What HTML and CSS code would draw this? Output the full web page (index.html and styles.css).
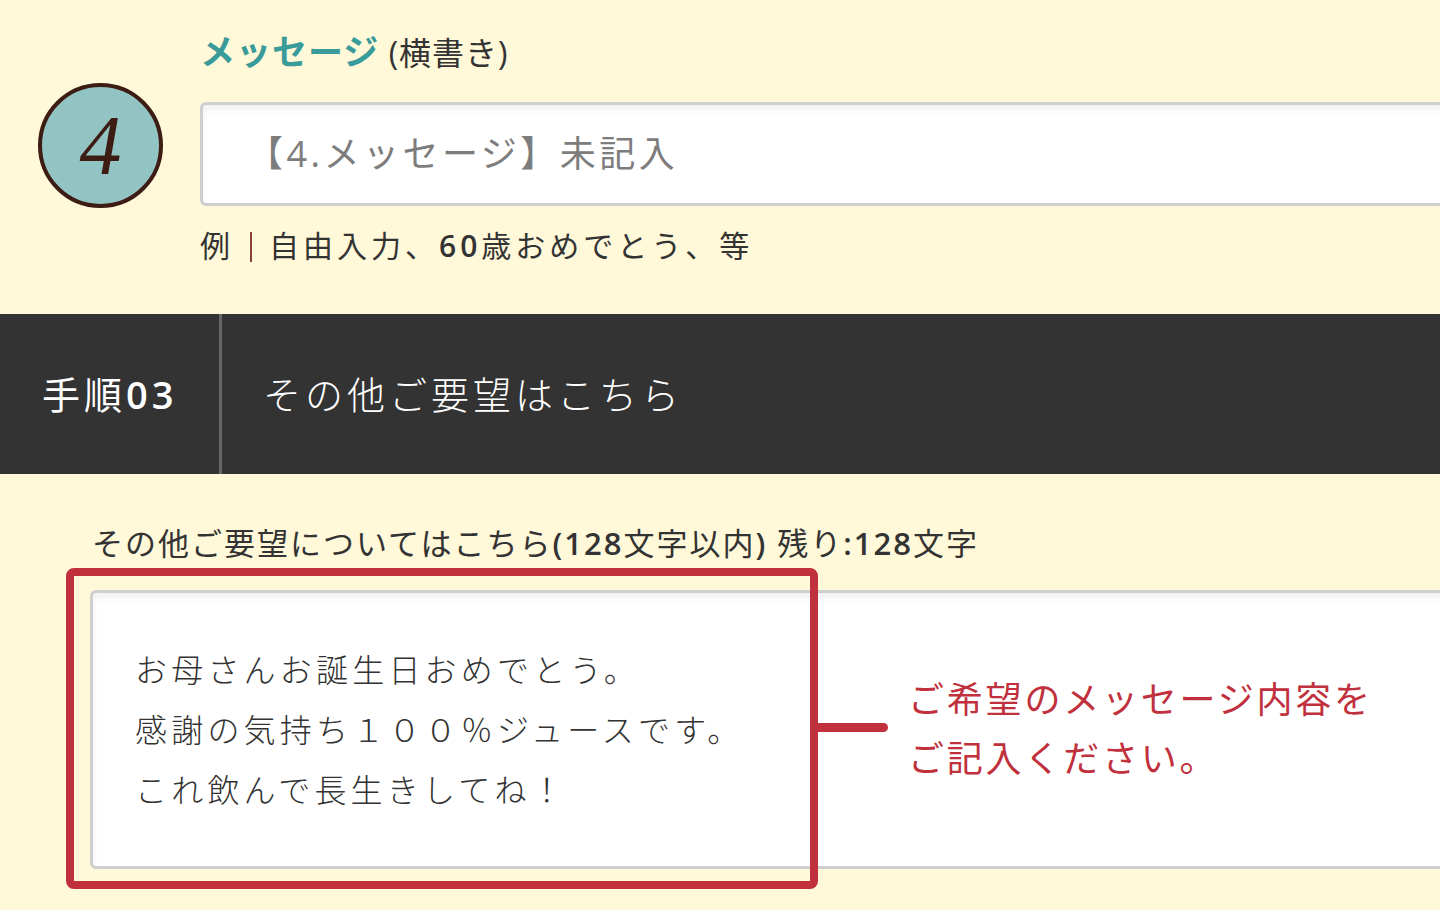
FILE: index.html
```html
<!DOCTYPE html>
<html lang="ja">
<head>
  <meta charset="UTF-8">
  <meta name="viewport" content="width=device-width, initial-scale=1">
  <title>ご注文フォーム</title>
  <link rel="stylesheet" href="styles.css">
</head>
<body>

  <!-- 4. メッセージ -->
  <div class="step">
    <h2 class="step-title"><span class="teal">メッセージ</span> (横書き)</h2>
    <div class="step-num">4</div>
    <div class="text-input">【4.メッセージ】未記入</div>
    <p class="example">例<span class="sep"></span>自由入力、<b>60</b>歳おめでとう、等</p>
  </div>

  <!-- 手順03 -->
  <div class="proc-bar">
    <div class="proc-no">手順<b>03</b></div>
    <div class="proc-title">その他ご要望はこちら</div>
  </div>

  <div class="request">
    <p class="request-label">その他ご要望についてはこちら<b>(128</b>文字以内<b>)</b> 残り<b>:128</b>文字</p>
    <div class="request-box">
      <div class="textarea">お母さんお誕生日おめでとう。<br>感謝の気持ち１００％ジュースです。<br>これ飲んで長生きしてね！</div>
      <!-- 赤枠と説明 -->
      <div class="red-frame"></div>
      <div class="red-line"></div>
      <p class="callout">ご希望のメッセージ内容を<br>ご記入ください。</p>
    </div>
  </div>

</body>
</html>
```

FILE: styles.css
```css
/* 全体 */
body {
  margin: 0;
  width: 1440px;
  height: 910px;
  overflow: hidden;
  background-color: #fff8d9;
  color: #333;
  font-family: "Open Sans", "Noto Sans CJK JP", sans-serif;
}

b {
  font-weight: 600;
}

/* 4. メッセージ */
.step {
  display: grid;
  grid-template-columns: 124px 1fr;
  column-gap: 38px;
  padding: 28px 0 0 38px;
  overflow: hidden;
}

.step-title {
  grid-column: 2;
  grid-row: 1;
  margin: 0;
  padding-top: 2px;
  font-size: 32px;
  font-weight: 400;
  line-height: 44px;
  letter-spacing: 1px;
}

.teal {
  color: #3a9b9b;
  font-size: 35px;
  font-weight: 700;
}

.step-num {
  grid-column: 1;
  grid-row: 2;
  align-self: end;
  margin-bottom: -2px;
  width: 117px;
  height: 117px;
  border: 4px solid #3d1c14;
  border-radius: 50%;
  background-color: #93c4c4;
  color: #3d1c14;
  font-family: "Liberation Serif", serif;
  font-style: italic;
  font-size: 84px;
  line-height: 117px;
  text-align: center;
}

.text-input {
  grid-column: 2;
  grid-row: 2;
  margin-top: 27px;
  width: calc(100% + 40px);
  height: 98px;
  box-sizing: content-box;
  border: 3px solid #cfcfcf;
  border-radius: 6px;
  background-color: #fff;
  box-shadow: inset 0 5px 6px rgba(0, 0, 0, 0.06);
  padding-left: 44px;
  color: #7d7d7d;
  font-size: 36px;
  line-height: 98px;
  letter-spacing: 3.5px;
}

.example {
  grid-column: 2;
  grid-row: 3;
  margin: 18px 0 0;
  font-size: 30px;
  line-height: 44px;
  letter-spacing: 4px;
}

.sep {
  display: inline-block;
  width: 2px;
  height: 30px;
  margin: 0 17px 0 16px;
  vertical-align: -5px;
  background-color: #8a3d3d;
}

/* 手順バー */
.proc-bar {
  display: flex;
  height: 160px;
  margin-top: 46px;
  background-color: #333;
  color: #fff;
}

.proc-no {
  width: 177px;
  padding-left: 42px;
  border-right: 3px solid #666;
  font-size: 38px;
  line-height: 160px;
  letter-spacing: 4px;
}

.proc-title {
  padding-left: 41px;
  font-size: 38px;
  font-weight: 300;
  line-height: 160px;
  letter-spacing: 4px;
}

/* その他ご要望 */
.request {
  padding: 47px 0 30px;
  overflow: hidden;
}

.request-label {
  margin: 0 0 0 92px;
  font-size: 31px;
  line-height: 44px;
  letter-spacing: 2px;
}

.request-box {
  position: relative;
  margin: 25px 0 0 90px;
}

.textarea {
  width: 1400px;
  height: 226px;
  padding: 47px 0 0 42px;
  border: 3px solid #cfcfcf;
  border-radius: 6px;
  background-color: #fff;
  box-shadow: inset 0 5px 6px rgba(0, 0, 0, 0.06);
  font-size: 32px;
  font-weight: 300;
  line-height: 60px;
  letter-spacing: 4.2px;
}

.red-frame {
  position: absolute;
  left: -24px;
  top: -22px;
  width: 736px;
  height: 305px;
  border: 8px solid #c0303d;
  border-radius: 8px;
}

.red-line {
  position: absolute;
  left: 726px;
  top: 133px;
  width: 72px;
  height: 9px;
  border-radius: 0 5px 5px 0;
  background-color: #c0303d;
}

.callout {
  position: absolute;
  left: 818px;
  top: 80px;
  margin: 0;
  color: #c0303d;
  font-size: 36px;
  line-height: 59px;
  letter-spacing: 2.8px;
}
```
